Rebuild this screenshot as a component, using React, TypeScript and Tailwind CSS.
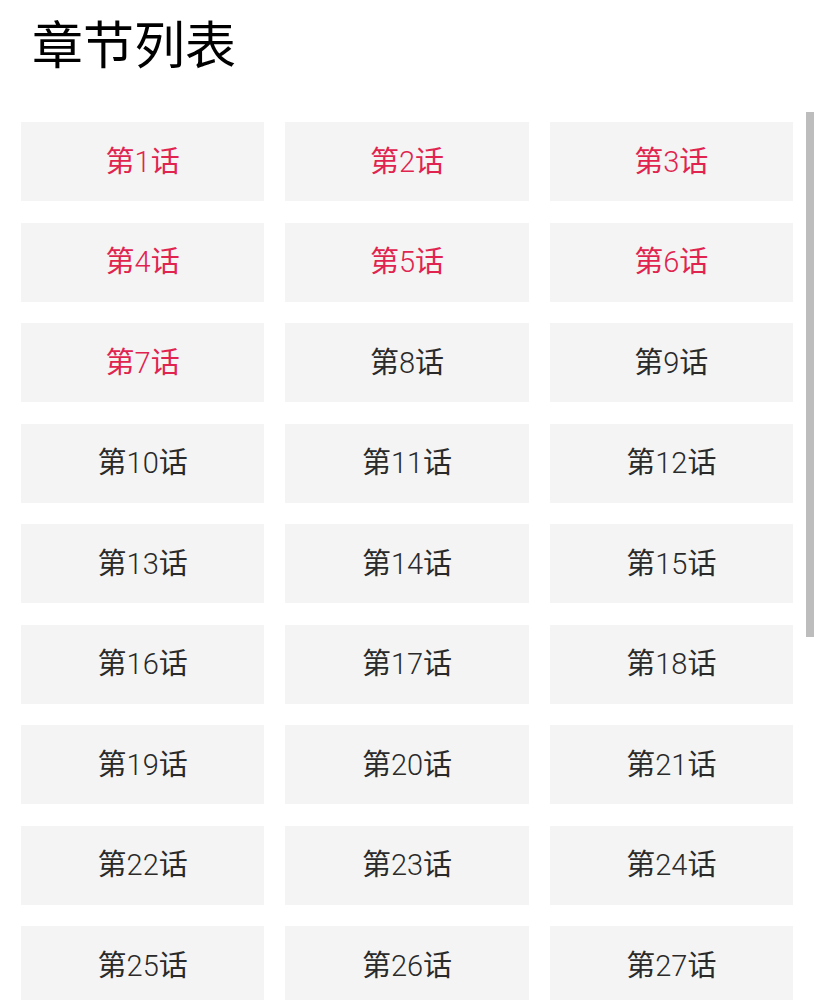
const chapters = Array.from({ length: 27 }, (_, i) => i + 1)

// chapters already read are shown in red
const readUpTo = 7

export default function App() {
  return (
    <div
      className="relative w-[814px] h-[1000px] overflow-hidden bg-white"
      style={{ fontFamily: 'Roboto, "Noto Sans CJK SC", sans-serif' }}
    >
      <h1 className="pl-[32px] pt-[19px] text-[51px] leading-[56px] font-normal text-black">章节列表</h1>

      <div className="grid grid-cols-3 gap-x-[21px] gap-y-[21.5px] px-[21px] mt-[47px]">
        {chapters.map((n) => (
          <div
            key={n}
            className={`h-[79px] flex items-center justify-center bg-[#f4f4f4] text-[29px] pt-[2px] ${
              n <= readUpTo ? 'text-[#e0244f]' : 'text-[#2a2a2a]'
            }`}
          >
            第<span className="font-light">{n}</span>话
          </div>
        ))}
      </div>

      {/* scrollbar */}
      <div className="absolute right-0 top-[112px] w-[8px] h-[525px] bg-[#bdbdbd]" />
    </div>
  )
}
